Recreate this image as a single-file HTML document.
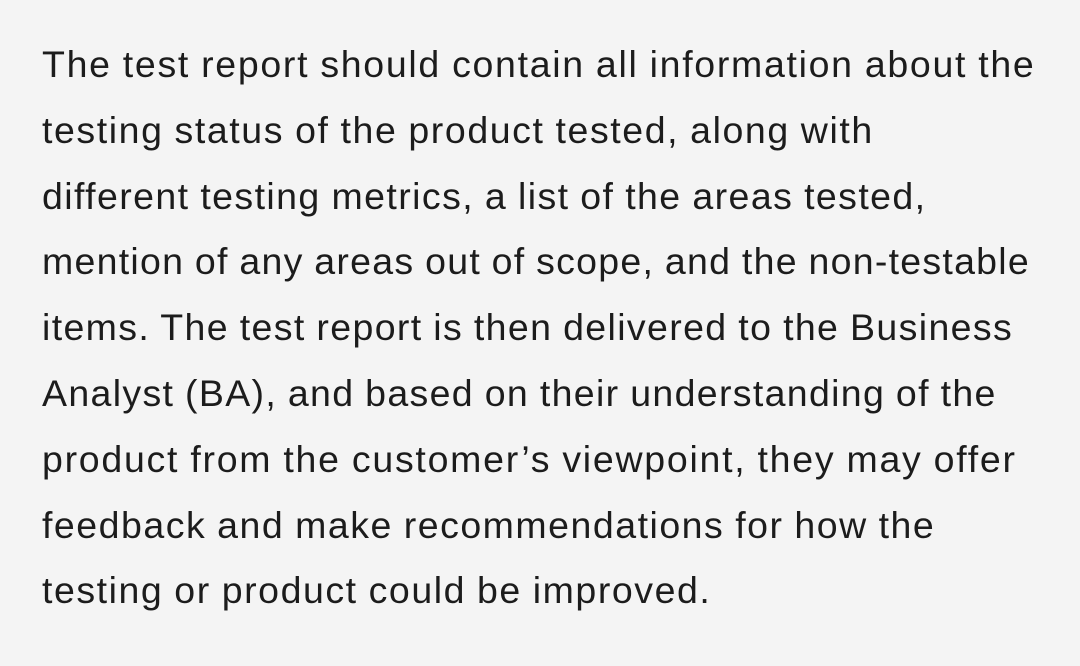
<!DOCTYPE html>
<html><head><meta charset="utf-8"><style>
html,body{margin:0;padding:0;}
body{width:1080px;height:666px;background:#f4f4f4;overflow:hidden;}
.t{position:absolute;left:42px;top:32px;font-family:"Liberation Sans",sans-serif;font-size:37.5px;line-height:65.8px;color:#1c1c1c;letter-spacing:1.5px;word-spacing:-1px;}
.t div{white-space:nowrap;}
</style></head><body>
<div class="t">
<div style="letter-spacing:1.69px">The test report should contain all information about the</div>
<div style="letter-spacing:1.58px">testing status of the product tested, along with</div>
<div style="letter-spacing:1.41px">different testing metrics, a list of the areas tested,</div>
<div style="letter-spacing:1.26px">mention of any areas out of scope, and the non-testable</div>
<div style="letter-spacing:1.36px">items. The test report is then delivered to the Business</div>
<div style="letter-spacing:1.33px">Analyst (BA), and based on their understanding of the</div>
<div style="letter-spacing:1.73px">product from the customer’s viewpoint, they may offer</div>
<div>feedback and make recommendations for how the</div>
<div style="letter-spacing:1.55px">testing or product could be improved.</div>
</div>
</body></html>
